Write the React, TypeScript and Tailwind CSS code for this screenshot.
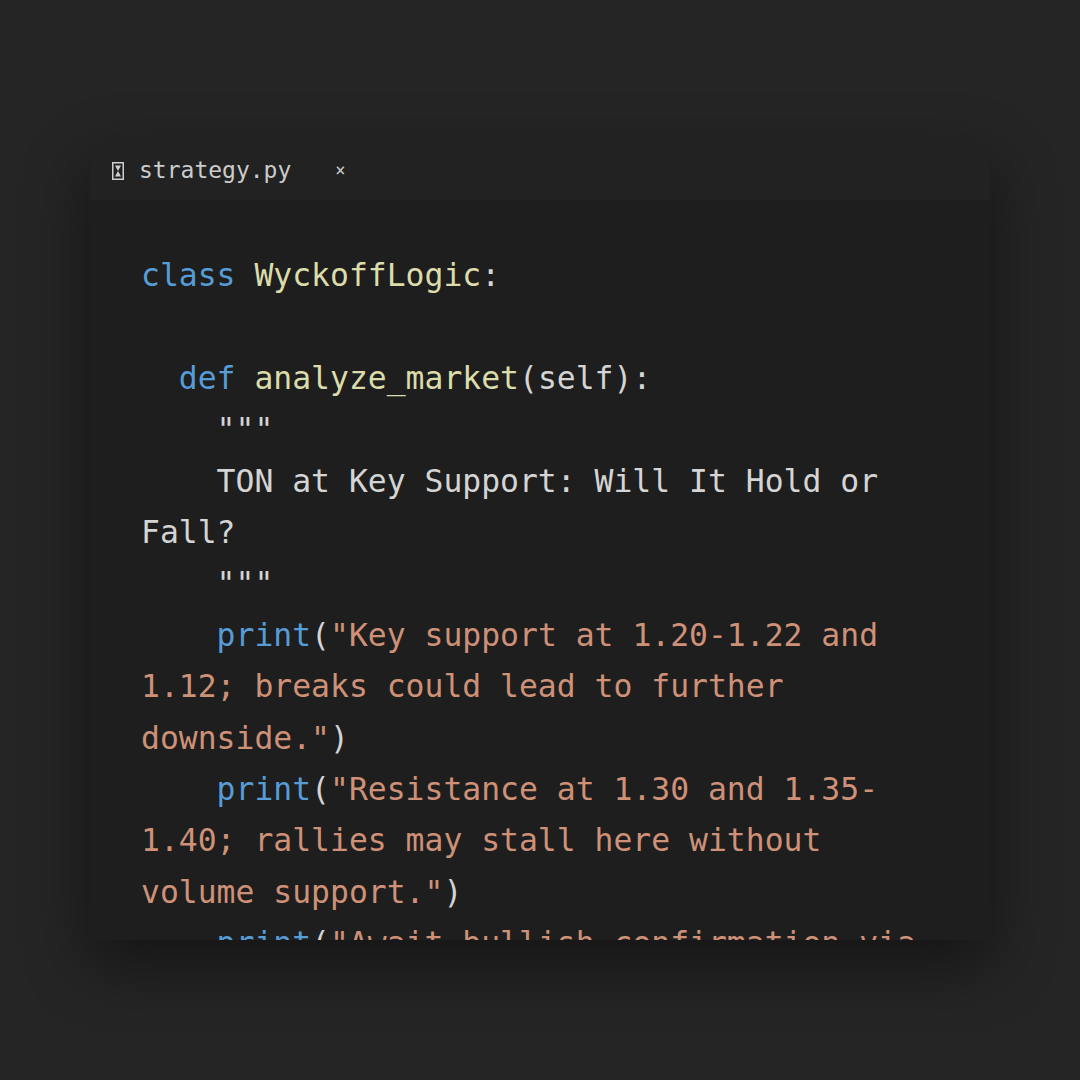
type Token = { t: string; c: string };

const KW = "text-[#569cd6]";
const FN = "text-[#dcdcaa]";
const STR = "text-[#ce9178]";
const TXT = "text-[#d4d4d4]";

const lines: Token[][] = [
  [
    { t: "class ", c: KW },
    { t: "WyckoffLogic", c: FN },
    { t: ":", c: TXT },
  ],
  [],
  [
    { t: "  def ", c: KW },
    { t: "analyze_market", c: FN },
    { t: "(self):", c: TXT },
  ],
  [{ t: '    """', c: TXT }],
  [{ t: "    TON at Key Support: Will It Hold or", c: TXT }],
  [{ t: "Fall?", c: TXT }],
  [{ t: '    """', c: TXT }],
  [
    { t: "    print", c: KW },
    { t: "(", c: TXT },
    { t: '"Key support at 1.20-1.22 and', c: STR },
  ],
  [{ t: "1.12; breaks could lead to further", c: STR }],
  [
    { t: 'downside."', c: STR },
    { t: ")", c: TXT },
  ],
  [
    { t: "    print", c: KW },
    { t: "(", c: TXT },
    { t: '"Resistance at 1.30 and 1.35-', c: STR },
  ],
  [{ t: "1.40; rallies may stall here without", c: STR }],
  [
    { t: 'volume support."', c: STR },
    { t: ")", c: TXT },
  ],
  [
    { t: "    print", c: KW },
    { t: "(", c: TXT },
    { t: '"Await bullish confirmation via', c: STR },
  ],
];

function FileIcon() {
  return (
    <svg width="12" height="18" viewBox="0 0 12 18" className="text-[#cfcfcf]">
      <rect x="0.75" y="0.75" width="10.5" height="16.5" fill="none" stroke="currentColor" strokeWidth="1.5" />
      <path d="M3 3.5 L9 3.5 L6 9 Z M3 14.5 L9 14.5 L6 9 Z" fill="currentColor" />
    </svg>
  );
}

export default function App() {
  return (
    <div className="min-h-[1080px] w-full bg-[#252525] pt-[141px] font-['DejaVu_Sans_Mono',monospace]">
      <div className="mx-auto w-[900px] shadow-[0_24px_60px_rgba(0,0,0,0.45)]">
        <div className="flex h-[59px] items-center bg-[#222222] pl-[22px]">
          <FileIcon />
          <span className="ml-[15px] text-[23px] leading-none text-[#cccccc]">strategy.py</span>
          <span className="ml-[44px] text-[17px] leading-none text-[#cccccc]">×</span>
        </div>
        <div className="h-[740px] overflow-hidden bg-[#1e1e1e] px-[51px] pt-[50px]">
          {lines.map((line, i) => (
            <div key={i} className="h-[51.4px] whitespace-pre text-[31.4px] leading-[51.4px]">
              {line.map((tok, j) => (
                <span key={j} className={tok.c}>
                  {tok.t}
                </span>
              ))}
            </div>
          ))}
        </div>
      </div>
    </div>
  );
}
